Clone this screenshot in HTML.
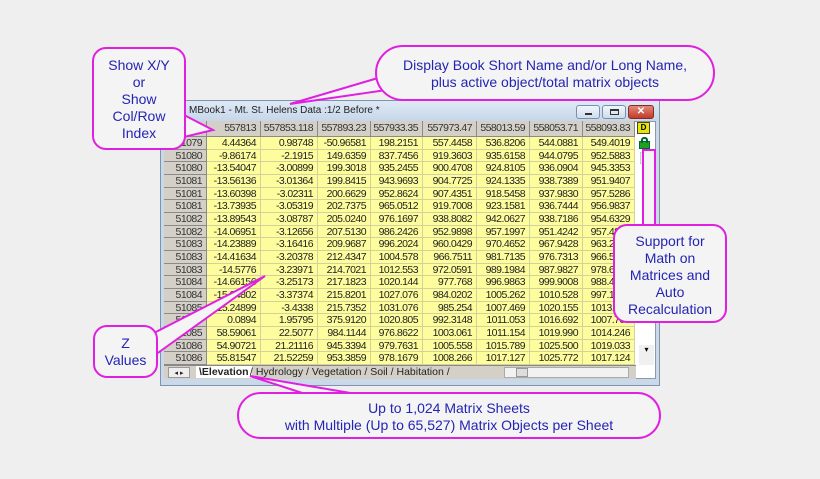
<!DOCTYPE html>
<html><head><meta charset="utf-8"><style>
*{margin:0;padding:0;box-sizing:border-box}
body{width:820px;height:479px;background:#efefef;position:relative;overflow:hidden;font-family:"Liberation Sans",sans-serif}
.win{position:absolute;left:160px;top:100px;width:500px;height:286px;background:#c9d9ea;border:1px solid #7f93ab}
.title{position:absolute;left:0;top:0;width:498px;height:20px;background:linear-gradient(#dfe9f5,#c6d7ea)}
.title span{position:absolute;left:28px;top:4px;font-size:10px;color:#222}
.btn{position:absolute;top:4px;height:14px;border:1px solid #7890ad;border-radius:3px;background:linear-gradient(#f0f5fb,#cfdceb)}
.grid{position:absolute;left:164px;top:121px}
.row{display:flex;height:12.67px}
.c{height:100%;border-right:1px solid #d2d29a;border-bottom:1px solid #d2d29a;background:#fdfd9d;font-size:10.5px;letter-spacing:-0.55px;line-height:12px;text-align:right;padding-right:4px;color:#222;overflow:hidden;white-space:nowrap}
.h{background:#d4d0c8;border-right:1px solid #8a8a8a;border-bottom:1px solid #8a8a8a;color:#333}
.hr .c{height:16px;line-height:15px}
.co{position:absolute;border:2px solid #e020e0;background:#f4f4f4;border-radius:14px;color:#2424b4;font-size:14px;text-align:center;line-height:17px}
</style></head><body>
<div class="win">
<div class="title"><span>MBook1 - Mt. St. Helens Data :1/2 Before *</span></div>
<div class="btn" style="left:415px;width:24px"><div style="position:absolute;left:8px;top:7px;width:7px;height:2px;background:#333"></div></div>
<div class="btn" style="left:441px;width:24px"><div style="position:absolute;left:7px;top:3px;width:9px;height:6px;border:1px solid #333;border-top-width:2px"></div></div>
<div class="btn" style="left:467px;width:26px;background:linear-gradient(#e08a7c,#c23a28);border-color:#8a2a20;color:#fff;font-size:10px;text-align:center;line-height:12px;font-weight:bold">✕</div>
<div style="position:absolute;left:3px;top:20px;width:492px;height:258px;background:#fff;border:1px solid #8a9aaa"></div>
</div>
<div class="grid">
<div class="row hr"><div class="c h" style="width:43px"></div><div class="c h" style="width:54px">557813</div><div class="c h" style="width:57px">557853.118</div><div class="c h" style="width:53px">557893.23</div><div class="c h" style="width:52px">557933.35</div><div class="c h" style="width:54px">557973.47</div><div class="c h" style="width:53px">558013.59</div><div class="c h" style="width:53px">558053.71</div><div class="c h" style="width:52px">558093.83</div></div>
</div>
<div id="rows" style="position:absolute;left:164px;top:137px"></div>
<div style="position:absolute;left:637px;top:122px;width:13px;height:12px;background:#e6e600;border:1px solid #444;font-size:8px;font-weight:bold;text-align:center;line-height:10px">D</div>
<div style="position:absolute;left:639px;top:141px;width:11px;height:8px;background:#20a020;border:1px solid #063"></div>
<div style="position:absolute;left:641px;top:137px;width:7px;height:6px;border:2px solid #063;border-bottom:none;border-radius:3px 3px 0 0"></div>
<div style="position:absolute;left:640px;top:152px;width:12px;height:12px;border:1px solid #ccc;background:#f4f4f4"></div>
<div style="position:absolute;left:639px;top:345px;width:15px;height:20px;background:#f0f0f0;font-size:8px;text-align:center">▾</div>
<div style="position:absolute;left:164px;top:365px;width:472px;height:14px;background:#d4d0c8;border-top:1px solid #888;font-size:10.5px;line-height:12px;color:#222;white-space:nowrap">
<span style="position:absolute;left:4px;top:1px;border:1px solid #999;background:#eee;width:22px;height:11px;font-size:7px;text-align:center">◂ ▸</span>
<span style="position:absolute;left:32px;top:0;background:#fff;padding:0 3px;font-weight:bold">\Elevation</span>
<span style="position:absolute;left:86px;top:0">/ Hydrology / Vegetation / Soil / Habitation /</span>
<span style="position:absolute;left:340px;top:1px;width:125px;height:11px;background:#f2f2f2;border:1px solid #aaa"></span>
<span style="position:absolute;left:352px;top:2px;width:12px;height:9px;background:#ddd;border:1px solid #999"></span>
</div>
<svg style="position:absolute;left:0;top:0" width="820" height="479">
<g fill="#f4f4f4" stroke="#e020e0" stroke-width="2">
<polygon points="378,78 290,104 400,88"/>
<polygon points="184,115 213,130 184,137"/>
<polygon points="150,335 265,276 155,355"/>
<polygon points="330,402 250,376 380,398"/>
<polygon points="643,230 643,150 655,150 655,230"/>
</g></svg>
<div class="co" style="left:92px;top:47px;width:94px;height:103px;padding-top:8px">Show X/Y<br>or<br>Show<br>Col/Row<br>Index</div>
<div class="co" style="left:375px;top:45px;width:340px;height:56px;border-radius:28px;padding-top:10px">Display Book Short Name and/or Long Name,<br>plus active object/total matrix objects</div>
<div class="co" style="left:613px;top:224px;width:114px;height:99px;padding-top:7px">Support for<br>Math on<br>Matrices and<br>Auto<br>Recalculation</div>
<div class="co" style="left:93px;top:325px;width:65px;height:53px;padding-top:8px">Z<br>Values</div>
<div class="co" style="left:237px;top:392px;width:424px;height:47px;border-radius:24px;padding-top:6px">Up to 1,024 Matrix Sheets<br>with Multiple (Up to 65,527) Matrix Objects per Sheet</div>
<script>
var d=[["51079","4.44364","0.98748","-50.96581","198.2151","557.4458","536.8206","544.0881","549.4019"],
["51080","-9.86174","-2.1915","149.6359","837.7456","919.3603","935.6158","944.0795","952.5883"],
["51080","-13.54047","-3.00899","199.3018","935.2455","900.4708","924.8105","936.0904","945.3353"],
["51081","-13.56136","-3.01364","199.8415","943.9693","904.7725","924.1335","938.7389","951.9407"],
["51081","-13.60398","-3.02311","200.6629","952.8624","907.4351","918.5458","937.9830","957.5286"],
["51081","-13.73935","-3.05319","202.7375","965.0512","919.7008","923.1581","936.7444","956.9837"],
["51082","-13.89543","-3.08787","205.0240","976.1697","938.8082","942.0627","938.7186","954.6329"],
["51082","-14.06951","-3.12656","207.5130","986.2426","952.9898","957.1997","951.4242","957.4800"],
["51083","-14.23889","-3.16416","209.9687","996.2024","960.0429","970.4652","967.9428","963.2000"],
["51083","-14.41634","-3.20378","212.4347","1004.578","966.7511","981.7135","976.7313","966.5000"],
["51083","-14.5776","-3.23971","214.7021","1012.553","972.0591","989.1984","987.9827","978.6000"],
["51084","-14.66156","-3.25173","217.1823","1020.144","977.768","996.9863","999.9008","988.4000"],
["51084","-15.04802","-3.37374","215.8201","1027.076","984.0202","1005.262","1010.528","997.1000"],
["51085","-15.24899","-3.4338","215.7352","1031.076","985.254","1007.469","1020.155","1013.000"],
["51085","0.0894","1.95795","375.9120","1020.805","992.3148","1011.053","1016.692","1007.700"],
["51085","58.59061","22.5077","984.1144","976.8622","1003.061","1011.154","1019.990","1014.246"],
["51086","54.90721","21.21116","945.3394","979.7631","1005.558","1015.789","1025.500","1019.033"],
["51086","55.81547","21.52259","953.3859","978.1679","1008.266","1017.127","1025.772","1017.124"]];
var w=[43,54,57,53,52,54,53,53,52],h="";
d.forEach(function(r){h+='<div class="row">';r.forEach(function(v,i){h+='<div class="c'+(i?'':' h')+'" style="width:'+w[i]+'px">'+v+'</div>'});h+='</div>'});
document.getElementById("rows").innerHTML=h;
</script>
</body></html>
